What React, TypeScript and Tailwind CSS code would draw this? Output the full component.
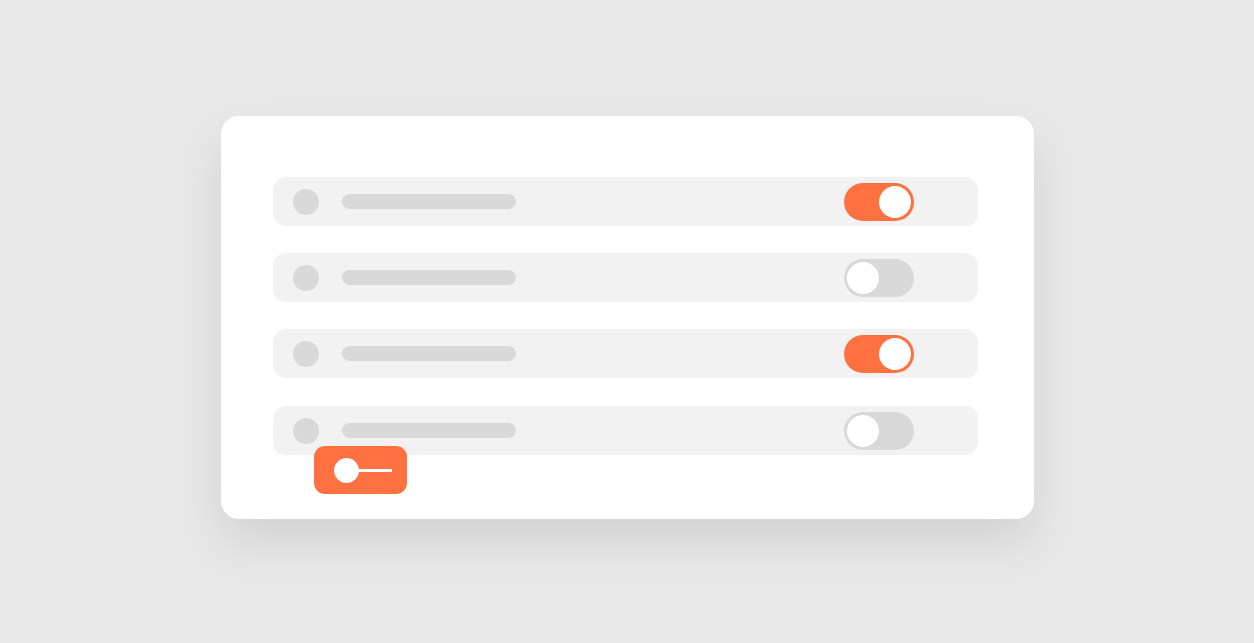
import React from "react";

function Toggle({ on }: { on: boolean }) {
  return (
    <div
      className={`w-[70px] h-[38px] rounded-full p-[3px] flex items-center ${
        on ? "bg-[#ff7140] justify-end" : "bg-[#d9d9d9] justify-start"
      }`}
    >
      <div className="w-[32px] h-[32px] rounded-full bg-white" />
    </div>
  );
}

function Row({ on, extra = "" }: { on: boolean; extra?: string }) {
  return (
    <div className={`h-[49px] rounded-[13px] bg-[#f2f2f2] flex items-center pl-[20px] pr-[64px] ${extra}`}>
      <div className="w-[26px] h-[26px] rounded-full bg-[#d9d9d9]" />
      <div className="ml-[23px] w-[174px] h-[15px] rounded-full bg-[#d9d9d9]" />
      <div className="flex-1" />
      <Toggle on={on} />
    </div>
  );
}

export default function App() {
  return (
    <div className="w-[1254px] h-[643px] bg-[#e9e9e9] flex justify-center pt-[116px] overflow-hidden" style={{ fontFamily: "'Liberation Sans', sans-serif" }}>
      <div className="w-[813px] h-[403px] bg-white rounded-[18px] shadow-[0_24px_50px_rgba(0,0,0,0.10)] pl-[52px] pr-[56px] pt-[61px] flex flex-col">
        <div className="flex flex-col gap-[27px]">
          <Row on={true} />
          <Row on={false} />
          <Row on={true} />
          <Row on={false} extra="mt-[1px]" />
        </div>
        <div className="relative -mt-[9px] ml-[41px] w-[93px] h-[48px] rounded-[11px] bg-[#ff7140] flex items-center pl-[20px]">
          <div className="w-[25px] h-[25px] rounded-full bg-white" />
          <div className="w-[33px] h-[3px] bg-white" />
        </div>
      </div>
    </div>
  );
}
